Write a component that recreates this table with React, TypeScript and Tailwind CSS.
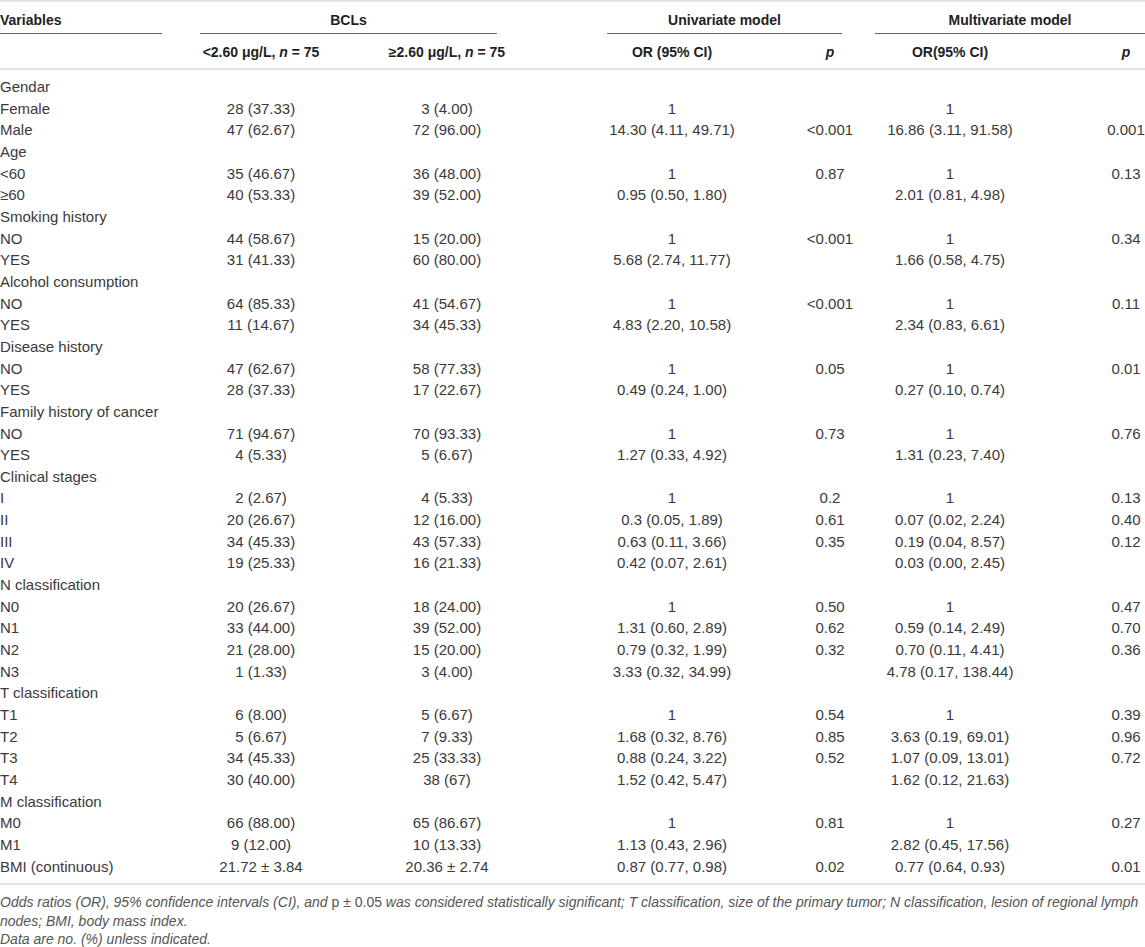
type Row = {
  label: string;
  group?: boolean;
  low?: string;
  high?: string;
  uOr?: string;
  uP?: string;
  mOr?: string;
  mP?: string;
};

const r = (
  label: string,
  low: string,
  high: string,
  uOr: string,
  uP: string,
  mOr: string,
  mP: string
): Row => ({ label, low, high, uOr, uP, mOr, mP });
const g = (label: string): Row => ({ label, group: true });

const rows: Row[] = [
  g("Gendar"),
  r("Female", "28 (37.33)", "3 (4.00)", "1", "", "1", ""),
  r("Male", "47 (62.67)", "72 (96.00)", "14.30 (4.11, 49.71)", "<0.001", "16.86 (3.11, 91.58)", "0.001"),
  g("Age"),
  r("<60", "35 (46.67)", "36 (48.00)", "1", "0.87", "1", "0.13"),
  r("≥60", "40 (53.33)", "39 (52.00)", "0.95 (0.50, 1.80)", "", "2.01 (0.81, 4.98)", ""),
  g("Smoking history"),
  r("NO", "44 (58.67)", "15 (20.00)", "1", "<0.001", "1", "0.34"),
  r("YES", "31 (41.33)", "60 (80.00)", "5.68 (2.74, 11.77)", "", "1.66 (0.58, 4.75)", ""),
  g("Alcohol consumption"),
  r("NO", "64 (85.33)", "41 (54.67)", "1", "<0.001", "1", "0.11"),
  r("YES", "11 (14.67)", "34 (45.33)", "4.83 (2.20, 10.58)", "", "2.34 (0.83, 6.61)", ""),
  g("Disease history"),
  r("NO", "47 (62.67)", "58 (77.33)", "1", "0.05", "1", "0.01"),
  r("YES", "28 (37.33)", "17 (22.67)", "0.49 (0.24, 1.00)", "", "0.27 (0.10, 0.74)", ""),
  g("Family history of cancer"),
  r("NO", "71 (94.67)", "70 (93.33)", "1", "0.73", "1", "0.76"),
  r("YES", "4 (5.33)", "5 (6.67)", "1.27 (0.33, 4.92)", "", "1.31 (0.23, 7.40)", ""),
  g("Clinical stages"),
  r("I", "2 (2.67)", "4 (5.33)", "1", "0.2", "1", "0.13"),
  r("II", "20 (26.67)", "12 (16.00)", "0.3 (0.05, 1.89)", "0.61", "0.07 (0.02, 2.24)", "0.40"),
  r("III", "34 (45.33)", "43 (57.33)", "0.63 (0.11, 3.66)", "0.35", "0.19 (0.04, 8.57)", "0.12"),
  r("IV", "19 (25.33)", "16 (21.33)", "0.42 (0.07, 2.61)", "", "0.03 (0.00, 2.45)", ""),
  g("N classification"),
  r("N0", "20 (26.67)", "18 (24.00)", "1", "0.50", "1", "0.47"),
  r("N1", "33 (44.00)", "39 (52.00)", "1.31 (0.60, 2.89)", "0.62", "0.59 (0.14, 2.49)", "0.70"),
  r("N2", "21 (28.00)", "15 (20.00)", "0.79 (0.32, 1.99)", "0.32", "0.70 (0.11, 4.41)", "0.36"),
  r("N3", "1 (1.33)", "3 (4.00)", "3.33 (0.32, 34.99)", "", "4.78 (0.17, 138.44)", ""),
  g("T classification"),
  r("T1", "6 (8.00)", "5 (6.67)", "1", "0.54", "1", "0.39"),
  r("T2", "5 (6.67)", "7 (9.33)", "1.68 (0.32, 8.76)", "0.85", "3.63 (0.19, 69.01)", "0.96"),
  r("T3", "34 (45.33)", "25 (33.33)", "0.88 (0.24, 3.22)", "0.52", "1.07 (0.09, 13.01)", "0.72"),
  r("T4", "30 (40.00)", "38 (67)", "1.52 (0.42, 5.47)", "", "1.62 (0.12, 21.63)", ""),
  g("M classification"),
  r("M0", "66 (88.00)", "65 (86.67)", "1", "0.81", "1", "0.27"),
  r("M1", "9 (12.00)", "10 (13.33)", "1.13 (0.43, 2.96)", "", "2.82 (0.45, 17.56)", ""),
  r("BMI (continuous)", "21.72 ± 3.84", "20.36 ± 2.74", "0.87 (0.77, 0.98)", "0.02", "0.77 (0.64, 0.93)", "0.01"),
];

// column centres: 261, 447, 672, 830, 950, 1126
const cols = "grid grid-cols-[200px_122px_250px_200px_116px_124px_228px]";

const Cell = ({ children }: { children?: React.ReactNode }) => (
  <div className="flex justify-center whitespace-nowrap">{children}</div>
);

export default function App() {
  return (
    <div className="w-[1145px] overflow-hidden bg-white font-['Liberation_Sans',Arial,sans-serif] text-[15px] text-[#3a3a3a]">
      <div className="w-[1240px] border-t-2 border-[#e3e3e3]">
        {/* header */}
        <div className="flex text-[14px] font-bold leading-[22px] text-[#222]">
          <div className="w-[162px] border-b border-[#666] pt-[7px] pb-[2px]">Variables</div>
          <div className="ml-[38px] flex w-[297px] justify-center border-b border-[#666] pt-[7px] pb-[2px]">BCLs</div>
          <div className="ml-[110px] flex w-[235px] justify-center border-b border-[#666] pt-[7px] pb-[2px]">
            Univariate model
          </div>
          <div className="ml-[33px] flex w-[270px] justify-center border-b border-[#666] pt-[7px] pb-[2px]">
            Multivariate model
          </div>
        </div>
        <div className={`${cols} border-b-2 border-[#e3e3e3] pt-[7px] pb-[5px] text-[14px] font-bold leading-[22px] text-[#222]`}>
          <div />
          <Cell>
            &lt;2.60 μg/L,&nbsp;<i>n</i>&nbsp;= 75
          </Cell>
          <Cell>
            ≥2.60 μg/L,&nbsp;<i>n</i>&nbsp;= 75
          </Cell>
          <Cell>OR (95% CI)</Cell>
          <Cell>
            <i>p</i>
          </Cell>
          <Cell>OR(95% CI)</Cell>
          <Cell>
            <i>p</i>
          </Cell>
        </div>

        {/* body */}
        <div className="border-b-2 border-[#e3e3e3] pt-[6px] pb-[6px] leading-[21.66px]">
          {rows.map((row, i) =>
            row.group ? (
              <div key={i} className={cols}>
                <div className="col-span-3 whitespace-nowrap">{row.label}</div>
              </div>
            ) : (
              <div key={i} className={cols}>
                <div className="whitespace-nowrap">{row.label}</div>
                <Cell>{row.low}</Cell>
                <Cell>{row.high}</Cell>
                <Cell>{row.uOr}</Cell>
                <Cell>{row.uP}</Cell>
                <Cell>{row.mOr}</Cell>
                <Cell>{row.mP}</Cell>
              </div>
            )
          )}
        </div>
      </div>

      {/* footnote */}
      <div className="pt-[8px] text-[14px] leading-[18.5px] italic text-[#555]">
        <p>
          Odds ratios (OR), 95% confidence intervals (CI), and <span className="not-italic">p ± 0.05</span> was
          considered statistically significant; T classification, size of the primary tumor; N classification,
          lesion of regional lymph nodes; BMI, body mass index.
        </p>
        <p>Data are no. (%) unless indicated.</p>
      </div>
    </div>
  );
}
